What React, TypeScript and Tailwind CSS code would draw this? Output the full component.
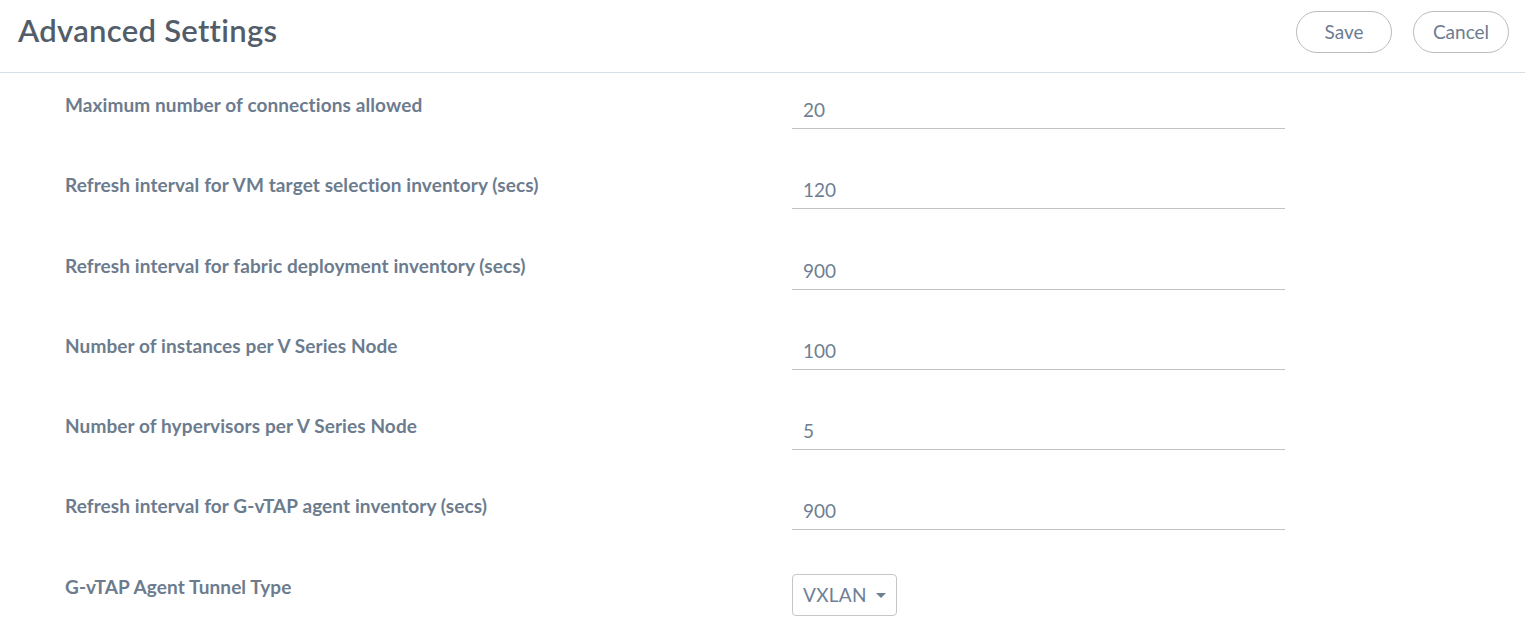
const rows = [
  { label: "Maximum number of connections allowed", value: "20" },
  { label: "Refresh interval for VM target selection inventory (secs)", value: "120" },
  { label: "Refresh interval for fabric deployment inventory (secs)", value: "900" },
  { label: "Number of instances per V Series Node", value: "100" },
  { label: "Number of hypervisors per V Series Node", value: "5" },
  { label: "Refresh interval for G-vTAP agent inventory (secs)", value: "900" },
]

export default function App() {
  return (
    <div className="w-[1525px] h-[637px] bg-white overflow-hidden font-['Lato','Noto_Sans',sans-serif]">
      {/* Header */}
      <div className="h-[73px] border-b border-[#d3e0e9] flex items-start justify-between pl-[18px] pr-[16px]">
        <h1 className="mt-[9px] text-[31px] leading-[42px] font-semibold text-[#525d69] tracking-[0.3px]">
          Advanced Settings
        </h1>
        <div className="flex gap-[21px] mt-[11px]">
          <button className="w-[96px] h-[42px] rounded-full border-[1.5px] border-[#bcbcbc] text-[19px] text-[#6d7d90]">
            Save
          </button>
          <button className="w-[96px] h-[42px] rounded-full border-[1.5px] border-[#bcbcbc] text-[19px] text-[#6d7d90]">
            Cancel
          </button>
        </div>
      </div>

      {/* Settings */}
      <div className="pt-[15px] pl-[65px]">
        {rows.map((r) => (
          <div key={r.label} className="flex items-start h-[80.3px]">
            <div className="w-[727px] text-[19px] leading-[34px] font-bold text-[#6c7c8e] tracking-[0.1px]">{r.label}</div>
            <div className="w-[493px] mt-[4px] h-[37px] border-b border-[#c2c2c2] pl-[11px] text-[19px] leading-[36px] text-[#6f7f93]">
              {r.value}
            </div>
          </div>
        ))}
        <div className="flex items-start h-[80px]">
          <div className="w-[727px] text-[19px] leading-[34px] font-bold text-[#6c7c8e] tracking-[0.1px]">G-vTAP Agent Tunnel Type</div>
          <button className="mt-[4px] h-[42px] w-[105px] rounded-[4px] border border-[#c6c6c6] flex items-center pl-[10px] gap-[9px] text-[19px] text-[#6f7f93] tracking-[0.3px]">
            VXLAN
            <svg width="10" height="6" viewBox="0 0 10 6" className="mt-[2px]">
              <path d="M0 0 L10 0 L5 5 Z" fill="#6f7f93" />
            </svg>
          </button>
        </div>
      </div>
    </div>
  )
}
